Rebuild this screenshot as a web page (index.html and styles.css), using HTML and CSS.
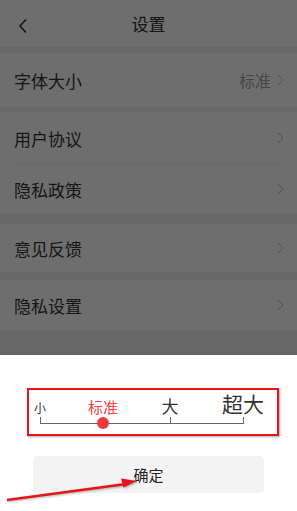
FILE: index.html
```html
<!DOCTYPE html>
<html lang="zh-CN">
<head>
  <meta charset="UTF-8">
  <meta name="viewport" content="width=device-width, initial-scale=1.0">
  <title>设置</title>
  <link rel="stylesheet" href="styles.css">
</head>
<body>
  <div id="settings">
    <div class="topbar">
      <svg class="back" width="12" height="16" viewBox="0 0 12 16">
        <path d="M9 1.5 L3 8 L9 14.5" fill="none" stroke="#333" stroke-width="1.6"/>
      </svg>
      <h1>设置</h1>
    </div>

    <div class="group g1">
      <div class="row r1">
        <span class="label">字体大小</span>
        <span class="value">标准</span>
        <svg class="chev" width="7" height="12" viewBox="0 0 7 12"><path d="M1 1 L6 6 L1 11" fill="none" stroke="#bbb" stroke-width="1"/></svg>
      </div>
    </div>

    <div class="group g2">
      <div class="row r2 divided">
        <span class="label">用户协议</span>
        <svg class="chev" width="7" height="12" viewBox="0 0 7 12"><path d="M1 1 L6 6 L1 11" fill="none" stroke="#bbb" stroke-width="1"/></svg>
      </div>
      <div class="row r3">
        <span class="label">隐私政策</span>
        <svg class="chev" width="7" height="12" viewBox="0 0 7 12"><path d="M1 1 L6 6 L1 11" fill="none" stroke="#bbb" stroke-width="1"/></svg>
      </div>
    </div>

    <div class="group g3">
      <div class="row r4">
        <span class="label">意见反馈</span>
        <svg class="chev" width="7" height="12" viewBox="0 0 7 12"><path d="M1 1 L6 6 L1 11" fill="none" stroke="#bbb" stroke-width="1"/></svg>
      </div>
    </div>

    <div class="group g4">
      <div class="row r5">
        <span class="label">隐私设置</span>
        <svg class="chev" width="7" height="12" viewBox="0 0 7 12"><path d="M1 1 L6 6 L1 11" fill="none" stroke="#bbb" stroke-width="1"/></svg>
      </div>
    </div>
  </div>

  <!-- dim mask under the font size dialog -->
  <div class="mask"></div>

  <div class="sheet">
    <div class="picker">
      <div class="scale">
        <div class="marks">
          <span class="mark s1" style="left: 0%">小</span>
          <span class="mark s2 active" style="left: 31%">标准</span>
          <span class="mark s3" style="left: 64%">大</span>
          <span class="mark s4" style="left: 100%">超大</span>
        </div>
        <div class="track">
          <i class="tick" style="left: 0%"></i>
          <i class="tick" style="left: 64%"></i>
          <i class="tick" style="left: 100%"></i>
          <b class="thumb" style="left: 31%"></b>
        </div>
      </div>
    </div>
    <button class="confirm">确定</button>
  </div>

  <!-- annotation arrow -->
  <svg class="arrow" width="297" height="511" viewBox="0 0 297 511">
    <line x1="7" y1="500" x2="126" y2="484" stroke="#e8141a" stroke-width="2.4"/>
    <polygon points="137,481 121,478.5 123.5,487.5" fill="#e8141a"/>
  </svg>
</body>
</html>
```

FILE: styles.css
```css
body {
  margin: 0;
  height: 511px;
  overflow: hidden;
  background-color: #f2f2f2;
  font-family: "Noto Sans CJK SC", "Noto Sans", sans-serif;
  color: #333;
}

.topbar {
  position: relative;
  height: 47px;
  background-color: #fff;
  display: flex;
  align-items: center;
  justify-content: center;
}

.topbar h1 {
  margin: 0;
  font-size: 17px;
  font-weight: normal;
  color: #333;
}

.topbar .back {
  position: absolute;
  left: 17px;
  top: 18px;
}

.group {
  background-color: #fff;
}

.g1 { margin-top: 6px; }
.g2 { margin-top: 5px; }
.g3 { margin-top: 10px; }
.g4 { margin-top: 8px; }

.row {
  display: flex;
  align-items: center;
  height: 50px;
  padding: 0 14px;
  position: relative;
}

.r1 { height: 54px; }
.r2 { height: 52px; }
.r3 { height: 50px; }
.r4 { height: 48px; }

.row.divided::after {
  content: "";
  position: absolute;
  left: 13px;
  right: 13px;
  bottom: 0;
  height: 1px;
  background-color: #eee;
}

.row .label {
  flex: 1;
  font-size: 17px;
  color: #333;
}

.row .value {
  font-size: 16px;
  color: #a6a6a6;
  margin-right: 6px;
}

.row .chev {
  margin-right: -1px;
}

.mask {
  position: fixed;
  inset: 0;
  background-color: rgba(0, 0, 0, 0.57);
}

.sheet {
  position: fixed;
  left: 0;
  right: 0;
  bottom: 0;
  height: 156px;
  background-color: #fff;
  box-sizing: border-box;
  padding-top: 33px;
}

.picker {
  margin-left: 27px;
  width: 252px;
  height: 48px;
  box-sizing: border-box;
  border: 2px solid #e8141a;
  box-shadow: 1px 1px 2px rgba(0, 0, 0, 0.35);
}

.scale {
  margin-left: 11px;
  width: 203px;
}

.marks {
  position: relative;
  height: 26px;
}

.mark {
  position: absolute;
  bottom: 2px;
  transform: translateX(-50%);
  line-height: 1;
  color: #333;
  white-space: nowrap;
}

.s1 { font-size: 12px; }
.s2 { font-size: 15px; }
.s3 { font-size: 17px; }
.s4 { font-size: 21px; }

.mark.active {
  color: #f04242;
}

.track {
  position: relative;
  margin-top: 7px;
  height: 1px;
  background-color: #666;
}

.tick {
  position: absolute;
  top: -6px;
  width: 1px;
  height: 7px;
  background-color: #666;
}

.thumb {
  position: absolute;
  top: 0;
  width: 12px;
  height: 12px;
  border-radius: 50%;
  background-color: #ef3b3e;
  transform: translate(-50%, -50%);
}

.confirm {
  display: block;
  margin: 20px 0 0 33px;
  width: 231px;
  height: 37px;
  border: none;
  border-radius: 5px;
  background-color: #f3f3f3;
  font-family: inherit;
  font-size: 15px;
  color: #222;
}

.arrow {
  position: fixed;
  left: 0;
  top: 0;
  pointer-events: none;
  filter: drop-shadow(1px 1px 1px rgba(0, 0, 0, 0.3));
}
```
